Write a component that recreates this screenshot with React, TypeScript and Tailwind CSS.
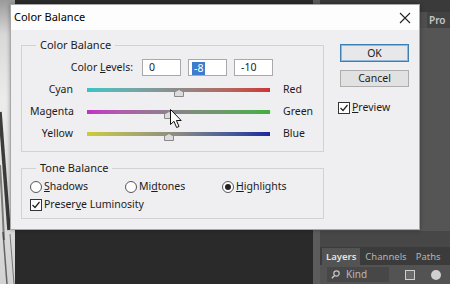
import { ReactNode } from "react";

const sliders = [
    { left: "Cyan", right: "Red", value: 0, track: "bg-linear-to-r from-[#35c4c6] via-[#8d8a8a] to-[#cc3434]" },
    { left: "Magenta", right: "Green", value: -10, track: "bg-linear-to-r from-[#c22fc4] via-[#858585] to-[#3cb03c]" },
    { left: "Yellow", right: "Blue", value: -10, track: "bg-linear-to-r from-[#cccc35] via-[#8a8a80] to-[#23239f]" },
];

const CheckBox = () => (
    <svg width="12" height="12" viewBox="0 0 12 12" className="shrink-0">
        <rect x="0.5" y="0.5" width="11" height="11" fill="#fff" stroke="#333" />
        <path d="M2.5 6 L5 8.5 L9.5 3" fill="none" stroke="#222" strokeWidth="1.2" />
    </svg>
);

const Radio = ({ on }: { on?: boolean }) => (
    <svg width="12" height="12" viewBox="0 0 12 12" className="shrink-0">
        <circle cx="6" cy="6" r="5.5" fill="#fff" stroke="#555" />
        {on && <circle cx="6" cy="6" r="3" fill="#222" />}
    </svg>
);

const Group = ({ title, children, className }: { title: string; children: ReactNode; className?: string }) => (
    <fieldset className={`border border-[#d2d2d4] pl-[8px] pr-2 ${className ?? ""}`}>
        <legend className="ml-[6px] px-[4px] leading-[16px] text-[11px]">{title}</legend>
        {children}
    </fieldset>
);

const SliderRow = ({ left, right, value, track }: { left: string; right: string; value: number; track: string }) => (
    <div className="flex items-center h-[22px]">
        <div className="w-[43px] text-right">{left}</div>
        <div className={`relative ml-[14px] w-[183px] h-[4px] ${track}`}>
            <svg
                width="10"
                height="8"
                viewBox="0 0 10 8"
                className="absolute top-[1px]"
                style={{ left: `calc(${50 + value / 2}% - 5px)` }}
            >
                <path d="M0.5 3 L5 0.5 L9.5 3 L9.5 7.5 L0.5 7.5 Z" fill="#dcdcdc" stroke="#8a8a8a" />
            </svg>
        </div>
        <div className="ml-[13px]">{right}</div>
    </div>
);

// edge of the photo behind the dialog
const PhotoEdge = () => (
    <svg width="15" height="284" viewBox="0 0 15 284" className="block shrink-0">
        <defs>
            <linearGradient id="photo" x1="0" y1="0" x2="0" y2="1">
                <stop offset="0" stopColor="#9a9a9a" />
                <stop offset="0.12" stopColor="#d8d8d8" />
                <stop offset="0.35" stopColor="#ececec" />
                <stop offset="1" stopColor="#d2d2d2" />
            </linearGradient>
        </defs>
        <rect width="15" height="284" fill="url(#photo)" />
        <path d="M0 112 C3 150 6 190 9 230" stroke="#1d1d1d" strokeWidth="3.5" fill="none" opacity="0.85" />
        <path d="M0 165 C2 195 3 220 4 240" stroke="#3a3a3a" strokeWidth="2" fill="none" opacity="0.6" />
        <path d="M3 232 L7 284" stroke="#333" strokeWidth="1.5" fill="none" opacity="0.7" />
        <path d="M10 234 L14 284" stroke="#777" strokeWidth="1" fill="none" />
    </svg>
);

const App = () => {
    return (
        <div className="relative w-[450px] h-[284px] overflow-hidden flex bg-[#2a2a2a] font-['Noto_Sans',sans-serif] text-[10.5px] text-[#1c1c1c]">
            {/* background: photo edge, canvas, panels */}
            <PhotoEdge />
            <div className="w-[298px] shrink-0 h-full bg-[#2a2a2a]" />
            <div className="w-[7px] shrink-0 h-full bg-[#5c5c5c]" />
            <div className="flex-1 min-w-0 h-full flex flex-col bg-[#4f4f4f]">
                <div className="h-[12px] bg-[#3a3a3a]" />
                <div className="flex justify-end h-[16px]">
                    <div className="w-[23px] bg-[#424242] text-[#c6c6c6] text-[10px] font-semibold leading-[16px] pl-[2px]">Pro</div>
                </div>
                <div className="flex-1 bg-[#555555]" />
                <div className="h-[16px] bg-[#474747]" />
                <div className="h-[18px] bg-[#3b3b3b] flex items-end pl-[2px] text-[9.5px] text-[#b4b4b4] whitespace-nowrap">
                    <div className="h-[17px] px-[4px] bg-[#535353] text-[#e4e4e4] font-semibold leading-[17px]">Layers</div>
                    <div className="px-[5px] leading-[17px]">Channels</div>
                    <div className="px-[4px] leading-[17px]">Paths</div>
                </div>
                <div className="h-[19px] bg-[#535353] flex items-center pl-[7px] gap-[16px] text-[10px] text-[#b8b8b8]">
                    <div className="w-[62px] h-[15px] bg-[#474747] flex items-center gap-[6px] px-[4px]">
                        <svg width="9" height="9" viewBox="0 0 9 9">
                            <circle cx="5.5" cy="3.5" r="2.7" fill="none" stroke="#c8c8c8" strokeWidth="1.2" />
                            <path d="M3.6 5.4 L0.8 8.2" stroke="#c8c8c8" strokeWidth="1.4" />
                        </svg>
                        <span>Kind</span>
                    </div>
                    <div className="w-[10px] h-[10px] border border-[#cfcfcf] bg-[#6a6a6a]" />
                    <div className="w-[10px] h-[10px] rounded-full bg-[#d0d0d0]" />
                </div>
            </div>

            {/* dialog window */}
            <div className="absolute left-[10px] top-[4px] w-[410px] h-[226px] flex flex-col border border-[#a8a8a8] bg-[#efeef1] shadow-[0_0_4px_rgba(0,0,0,0.35)]">
                <div className="h-[25px] shrink-0 bg-[#fdfdfd] flex items-center justify-between pl-[3px] pr-[8px]">
                    <span className="text-[11px] text-black">Color Balance</span>
                    <svg width="12" height="12" viewBox="0 0 12 12">
                        <path d="M1 1 L11 11 M11 1 L1 11" stroke="#222" strokeWidth="1.1" />
                    </svg>
                </div>
                <div className="flex pl-[10px] pt-[7px]">
                    <div className="w-[303px] flex flex-col">
                        <Group title="Color Balance" className="pb-[6px]">
                            <div className="flex items-center mt-[6px] h-[17px]">
                                <div className="w-[103px] text-right">
                                    Color <u>L</u>evels:
                                </div>
                                <div className="ml-[9px] flex gap-[7px]">
                                    <div className="w-[39px] h-[17px] bg-white border border-[#a9a9a9] pl-[6px] leading-[15px]">0</div>
                                    <div className="w-[39px] h-[17px] bg-white border border-[#a9a9a9] pl-[3px] pt-[1px]">
                                        <span className="inline-block h-[13px] px-[2px] bg-[#3d7dcb] text-white leading-[13px]">-8</span>
                                    </div>
                                    <div className="w-[39px] h-[17px] bg-white border border-[#a9a9a9] pl-[6px] leading-[15px]">-10</div>
                                </div>
                            </div>
                            <div className="mt-[3px]">
                                {sliders.map((s) => (
                                    <SliderRow key={s.left} {...s} />
                                ))}
                            </div>
                        </Group>
                        <Group title="Tone Balance" className="mt-[8px] pb-[4px]">
                            <div className="flex items-center h-[18px] mt-[2px]">
                                <div className="w-[95px] flex items-center gap-[2px]">
                                    <Radio />
                                    <span><u>S</u>hadows</span>
                                </div>
                                <div className="w-[97px] flex items-center gap-[2px]">
                                    <Radio />
                                    <span>Mi<u>d</u>tones</span>
                                </div>
                                <div className="flex items-center gap-[2px]">
                                    <Radio on />
                                    <span><u>H</u>ighlights</span>
                                </div>
                            </div>
                            <div className="flex items-center h-[18px] gap-[2px]">
                                <CheckBox />
                                <span>Preser<u>v</u>e Luminosity</span>
                            </div>
                        </Group>
                    </div>
                    <div className="ml-[16px] w-[69px] pt-[7px] flex flex-col">
                        <button className="h-[18px] border border-[#3c7fb1] bg-[#e8e8ea] shadow-[inset_0_0_0_1px_#8fb8da] leading-[15px]">OK</button>
                        <button className="mt-[8px] h-[17px] border border-[#adadad] bg-[#e1e1e1] leading-[15px]">Cancel</button>
                        <div className="mt-[14px] h-[14px] flex items-center gap-[2px] -ml-[2px]">
                            <CheckBox />
                            <span><u>P</u>review</span>
                        </div>
                    </div>
                </div>
            </div>

            {/* mouse pointer */}
            <svg width="13" height="20" viewBox="0 0 13 20" className="absolute left-[170px] top-[109px]">
                <path d="M0.5 0.5 L0.5 15.5 L4 12.3 L6.6 18.5 L9 17.5 L6.4 11.5 L11.2 11.5 Z" fill="#fff" stroke="#111" strokeWidth="1" />
            </svg>
        </div>
    );
};

export default App;
